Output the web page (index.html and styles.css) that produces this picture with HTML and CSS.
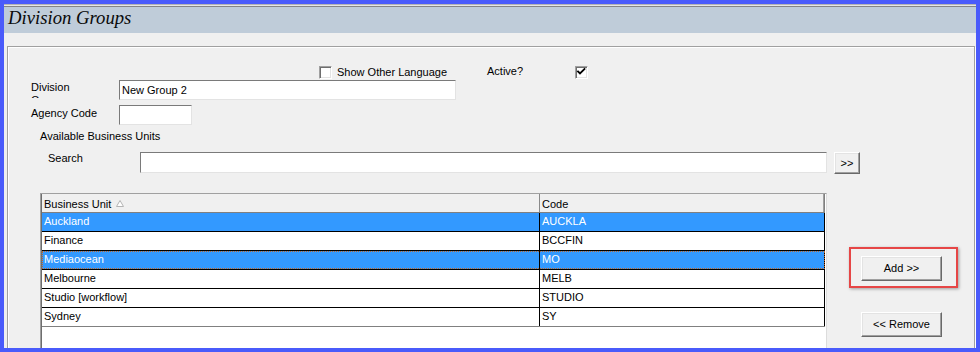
FILE: index.html
```html
<!DOCTYPE html>
<html>
<head>
<meta charset="utf-8">
<link rel="stylesheet" href="styles.css">
</head>
<body>
<div class="frame">
  <div class="titlebar"><span class="title">Division Groups</span></div>
  <div class="panel">
    <div class="groupbox">
      <div class="row row-options">
        <span class="check"></span>
        <span class="opt-label">Show Other Language</span>
        <span class="active-label">Active?</span>
        <span class="check"><svg class="tick" width="11" height="11" viewBox="0 0 11 11"><path d="M2 4.5 L4 6.5 L8.5 2" fill="none" stroke="#000" stroke-width="1.8" stroke-linecap="square"/></svg></span>
      </div>
      <div class="row row-division">
        <span class="lbl lbl-division">Division Group</span>
        <div class="input input-division">New Group 2</div>
      </div>
      <div class="row row-agency">
        <span class="lbl lbl-agency">Agency Code</span>
        <div class="input input-agency"></div>
      </div>
      <div class="row row-available">
        <span class="lbl lbl-available">Available Business Units</span>
      </div>
      <div class="row row-search">
        <span class="lbl lbl-search">Search</span>
        <div class="input input-search"></div>
        <div class="btn btn-go">&gt;&gt;</div>
      </div>
      <div class="row row-grid">
        <div class="grid">
          <div class="grid-inner">
            <div class="grid-head">
              <div class="hcell hcell-unit">Business Unit<svg class="sort" width="8" height="7" viewBox="0 0 8 7"><path d="M4 0.5 L7.5 6.5 L0.5 6.5 Z" fill="#fff" stroke="#b4b4b4" stroke-width="1"/></svg></div>
              <div class="hcell hcell-code">Code</div>
            </div>
            <div class="grow selected"><div class="cell cell-unit">Auckland</div><div class="cell cell-code">AUCKLA</div></div>
            <div class="grow"><div class="cell cell-unit">Finance</div><div class="cell cell-code">BCCFIN</div></div>
            <div class="grow selected focused"><div class="cell cell-unit">Mediaocean</div><div class="cell cell-code">MO</div></div>
            <div class="grow"><div class="cell cell-unit">Melbourne</div><div class="cell cell-code">MELB</div></div>
            <div class="grow"><div class="cell cell-unit">Studio [workflow]</div><div class="cell cell-code">STUDIO</div></div>
            <div class="grow last"><div class="cell cell-unit">Sydney</div><div class="cell cell-code">SY</div></div>
          </div>
        </div>
        <div class="side">
          <div class="highlight"><div class="btn btn-wide">Add &gt;&gt;</div></div>
          <div class="btn btn-wide btn-remove">&lt;&lt; Remove</div>
        </div>
      </div>
    </div>
  </div>
</div>
</body>
</html>
```
FILE: styles.css
```css
html, body {
  margin: 0;
  padding: 0;
  background: #4a5bfb;
}
body {
  font-family: "Liberation Sans", Arial, sans-serif;
  font-size: 11px;
  color: #000;
}
.frame {
  width: 980px;
  height: 352px;
  box-sizing: border-box;
  border: 4px solid #4a5bfb;
  background: #f0f0f0;
  overflow: hidden;
}
.titlebar {
  height: 29px;
  box-sizing: border-box;
  border-top: 1px solid #b4b4b4;
  box-shadow: inset 0 1px 0 #e6e6e6, inset 0 2px 0 #858585;
  background: #bfccd9;
  padding: 2px 0 0 4px;
}
.title {
  display: block;
  font-family: "Liberation Serif", "Times New Roman", serif;
  font-style: italic;
  font-size: 18.7px;
  line-height: 21px;
  color: #0a0a0a;
}
.panel {
  padding: 13px 0 0 3px;
}
.groupbox {
  width: 968px;
  height: 330px;
  box-sizing: border-box;
  border: 1px solid #a0a0a0;
  box-shadow: inset 1px 1px 0 #fff, 1px 1px 0 #fff;
}
.row {
  display: flex;
  align-items: flex-start;
}
.lbl {
  line-height: 13px;
  white-space: nowrap;
}
/* options row */
.row-options {
  margin-top: 19px;
  padding-left: 311px;
  line-height: 13px;
}
.check {
  width: 13px;
  height: 13px;
  box-sizing: border-box;
  background: #fff;
  border: 1px solid;
  border-color: #a0a0a0 #fff #fff #a0a0a0;
  box-shadow: inset 1px 1px 0 #6e6e6e, inset -1px -1px 0 #e3e3e3;
  flex: none;
}
.tick {
  display: block;
}
.opt-label {
  margin-left: 5px;
  width: 150px;
}
.active-label {
  width: 88px;
  margin-top: -1px;
}
/* inputs */
.input {
  box-sizing: border-box;
  background: #fff;
  border: 1px solid;
  border-color: #7a7a7a #e3e3e3 #e3e3e3 #7a7a7a;
  padding-left: 2px;
  line-height: 18px;
  flex: none;
}
.row-division {
  margin-top: 1px;
}
.lbl-division {
  margin-left: 23px;
  margin-right: 28px;
  margin-top: 1px;
  width: 60px;
  height: 17px;
  overflow: hidden;
  white-space: normal;
}
.input-division {
  width: 337px;
  height: 20px;
}
.row-agency {
  margin-top: 5px;
}
.lbl-agency {
  margin-left: 23px;
  margin-top: 2px;
  width: 88px;
}
.input-agency {
  width: 73px;
  height: 20px;
}
.row-available {
  margin-top: 5px;
}
.lbl-available {
  margin-left: 32px;
}
.row-search {
  margin-top: 9px;
}
.lbl-search {
  margin-left: 40px;
  width: 92px;
}
.input-search {
  width: 687px;
  height: 21px;
}
/* buttons */
.btn {
  box-sizing: border-box;
  background: #f0f0f0;
  border: 1px solid;
  border-color: #fff #696969 #696969 #fff;
  box-shadow: inset -1px -1px 0 #a0a0a0, inset 1px 1px 0 #e3e3e3;
  display: flex;
  align-items: center;
  justify-content: center;
  line-height: 13px;
  flex: none;
}
.btn-go {
  margin-left: 7px;
  width: 26px;
  height: 22px;
}
.btn-wide {
  width: 81px;
  height: 25px;
}
/* grid */
.row-grid {
  margin-top: 19px;
}
.grid {
  margin-left: 32px;
  width: 787px;
  height: 170px;
  box-sizing: border-box;
  border: 1px solid #a0a0a0;
  border-right-color: #dcdcdc;
  border-bottom: none;
  background: #fff;
  flex: none;
}
.grid-inner {
  height: 100%;
  border-left: 1px solid #6e6e6e;
}
.grid-head {
  display: flex;
  width: 783px;
  height: 19px;
  box-sizing: border-box;
  background: #f0f0f0;
  border-bottom: 1px solid #808080;
}
.hcell {
  box-sizing: border-box;
  padding: 4px 0 0 2px;
  line-height: 13px;
  white-space: nowrap;
  display: flex;
  align-items: flex-start;
}
.hcell-unit {
  width: 498px;
  border-right: 1px solid #8a8a8a;
}
.hcell-code {
  width: 285px;
  border-right: 1px solid #808080;
  box-shadow: inset -1px 0 0 #a0a0a0;
}
.sort {
  margin-left: 5px;
  margin-top: 2px;
}
.grow {
  position: relative;
  display: flex;
  width: 783px;
  height: 19px;
  box-sizing: border-box;
  border-bottom: 1px solid #000;
  background: #fff;
}
.grow.last {
  border-bottom-color: #808080;
}
.grow.selected {
  background: #3399ff;
  color: #fff;
}
.grow.focused::after {
  content: "";
  position: absolute;
  left: 0;
  top: 0;
  right: 0;
  bottom: 0;
  border: 1px dotted #c0682a;
}
.cell {
  box-sizing: border-box;
  padding: 2px 0 0 2px;
  line-height: 13px;
  white-space: nowrap;
  border-right: 1px solid #000;
}
.cell-unit {
  width: 498px;
}
.cell-code {
  width: 285px;
}
/* side buttons */
.side {
  margin-left: 22px;
  display: flex;
  flex-direction: column;
  align-items: flex-start;
}
.highlight {
  margin-top: 54px;
  width: 109px;
  height: 41px;
  box-sizing: border-box;
  border: 2px solid #e64646;
  padding: 7px 0 0 10px;
  box-shadow: 1px 1px 3px rgba(0, 0, 0, 0.35);
}
.btn-remove {
  margin-top: 24px;
  margin-left: 12px;
}
```
